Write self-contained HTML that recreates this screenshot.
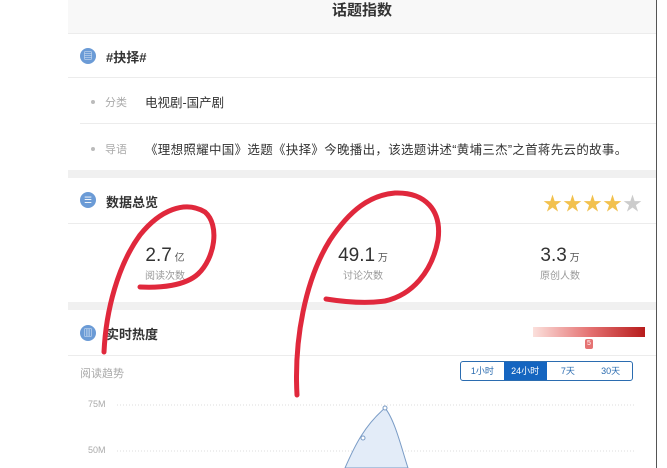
<!DOCTYPE html>
<html><head><meta charset="utf-8"><style>
*{margin:0;padding:0;box-sizing:border-box}
body{width:667px;height:468px;overflow:hidden;background:#fff;position:relative;font-family:"Liberation Sans","Noto Sans CJK SC",sans-serif;color:#333}
.a{position:absolute}
.pg{left:68px;top:0;width:588px;height:468px;background:#fff}
.vl{left:656px;top:0;width:1px;height:468px;background:#555}
.hl{height:1px;background:#ececec}
.ic{width:16px;height:16px;border-radius:50%;background:#6b9bd6;color:#fff;font-size:9px;text-align:center;line-height:16px}
.t{font-size:13px;font-weight:bold;color:#333}
.lbl{font-size:11px;color:#aaa}
.dot{width:4px;height:4px;border-radius:50%;background:#bbb}
.num{font-size:19px;color:#333;text-align:center;width:120px}
.num small{font-size:10px;color:#555}
.sub{font-size:10px;color:#999;text-align:center;width:120px}
.star{font-size:19px;color:#f2c14e}
.btn{font-size:9px;color:#2b6cb0;text-align:center;line-height:18px;width:43px}
</style></head><body>
<div class="a pg"></div>
<div class="a" style="left:68px;top:0;width:588px;height:33px;background:#f8f8f8"></div>
<div class="a" style="left:68px;top:1px;width:588px;text-align:center;font-size:15px;font-weight:bold;color:#333;line-height:20px">话题指数</div>
<div class="a hl" style="left:68px;top:33px;width:588px"></div>
<div class="a ic" style="left:80px;top:48px">▤</div>
<div class="a t" style="left:106px;top:47px">#抉择#</div>
<div class="a hl" style="left:68px;top:77px;width:588px"></div>
<div class="a dot" style="left:91px;top:100px"></div>
<div class="a lbl" style="left:105px;top:94px">分类</div>
<div class="a" style="left:145px;top:92px;font-size:12.5px">电视剧-国产剧</div>
<div class="a hl" style="left:80px;top:123px;width:576px"></div>
<div class="a dot" style="left:91px;top:147px"></div>
<div class="a lbl" style="left:105px;top:141px">导语</div>
<div class="a" style="left:145px;top:139px;font-size:12.5px;white-space:nowrap;letter-spacing:0.3px">《理想照耀中国》选题《抉择》今晚播出，该选题讲述“黄埔三杰”之首蒋先云的故事。</div>
<div class="a" style="left:68px;top:170px;width:588px;height:8px;background:#f0f0f0"></div>
<div class="a ic" style="left:80px;top:192px">☰</div>
<div class="a t" style="left:106px;top:192px">数据总览</div>
<div class="a star" style="left:543px;top:189px;letter-spacing:1px">★★★★<span style="color:#ccc">★</span></div>
<div class="a hl" style="left:68px;top:223px;width:588px"></div>
<div class="a num" style="left:105px;top:245px">2.7<small> 亿</small></div>
<div class="a sub" style="left:105px;top:267px">阅读次数</div>
<div class="a num" style="left:303px;top:245px">49.1<small> 万</small></div>
<div class="a sub" style="left:303px;top:267px">讨论次数</div>
<div class="a num" style="left:500px;top:245px">3.3<small> 万</small></div>
<div class="a sub" style="left:500px;top:267px">原创人数</div>
<div class="a" style="left:68px;top:302px;width:588px;height:8px;background:#f0f0f0"></div>
<div class="a ic" style="left:80px;top:325px">▥</div>
<div class="a t" style="left:106px;top:324px">实时热度</div>
<div class="a" style="left:533px;top:327px;width:112px;height:10px;background:linear-gradient(90deg,#fbe0dc,#e57373,#b71c1c)"></div>
<div class="a" style="left:585px;top:339px;width:8px;height:10px;background:#e57373;border-radius:2px;color:#fff;font-size:7px;text-align:center;line-height:10px">5</div>
<div class="a hl" style="left:68px;top:355px;width:588px"></div>
<div class="a lbl" style="left:80px;top:365px">阅读趋势</div>
<div class="a" style="left:460px;top:361px;width:173px;height:20px;border:1px solid #2b6cb0;border-radius:3px;display:flex">
<div class="btn">1小时</div><div class="btn" style="background:#1565c0;color:#fff">24小时</div><div class="btn">7天</div><div class="btn">30天</div></div>
<div class="a lbl" style="left:88px;top:399px;font-size:9px">75M</div>
<div class="a lbl" style="left:88px;top:445px;font-size:9px">50M</div>
<svg class="a" style="left:0;top:0" width="667" height="468">
<line x1="117" y1="405" x2="635" y2="405" stroke="#ddd" stroke-dasharray="1,2"/>
<line x1="117" y1="451" x2="635" y2="451" stroke="#ddd" stroke-dasharray="1,2"/>
<path d="M345 468 C355 445 365 425 385 408 C395 420 402 450 408 468 Z" fill="#e3ecf8" stroke="#7a9cc6" stroke-width="1"/>
<circle cx="385" cy="408" r="2" fill="#fff" stroke="#7a9cc6"/>
<circle cx="363" cy="438" r="2" fill="#fff" stroke="#7a9cc6"/>
<path d="M104 352 C106 310 118 265 140 235 C160 210 185 200 205 212 C220 225 215 258 198 274 C185 286 160 288 140 287" fill="none" stroke="#e0283c" stroke-width="5" stroke-linecap="round"/>
<path d="M297 395 C294 340 305 280 330 240 C350 210 370 195 395 193 C425 192 442 210 438 240 C432 272 412 295 385 301 C365 304 345 302 326 299" fill="none" stroke="#e0283c" stroke-width="5" stroke-linecap="round"/>
</svg>
<div class="a vl"></div>
</body></html>
